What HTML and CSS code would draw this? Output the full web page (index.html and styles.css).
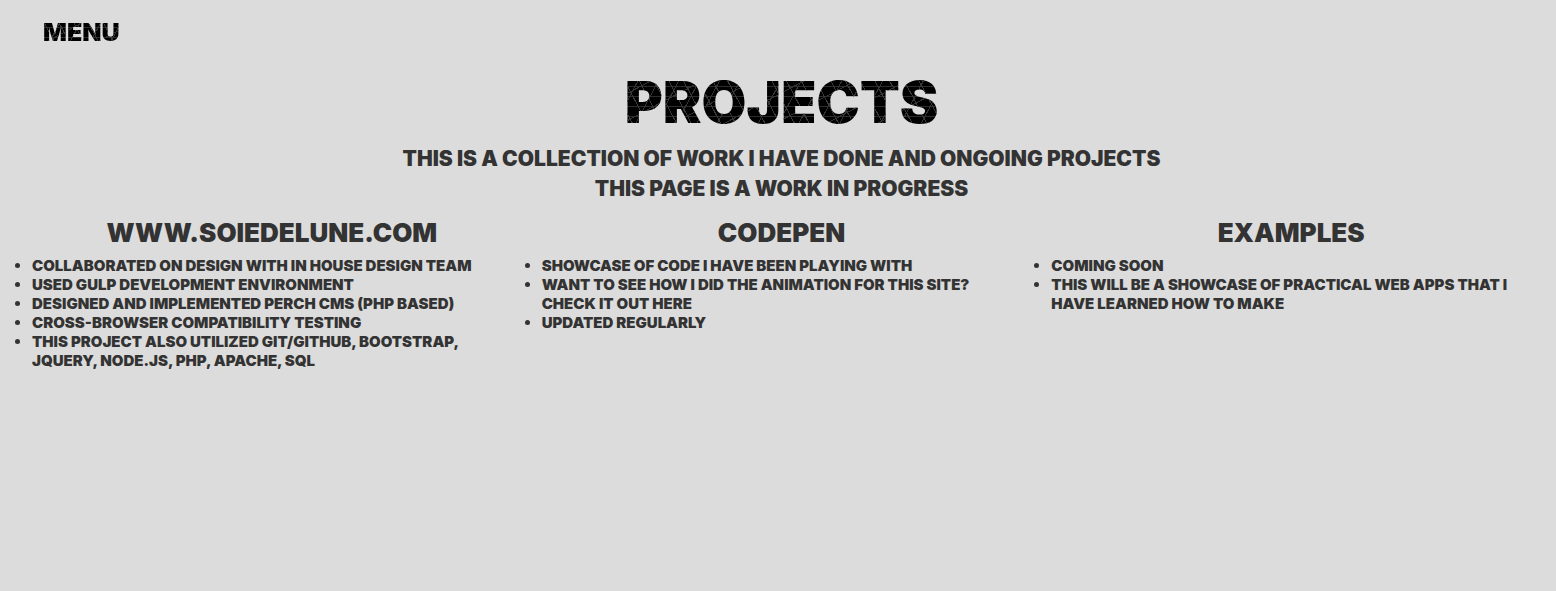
FILE: index.html
```html
<!DOCTYPE html>
<html lang="en">
<head>
<meta charset="utf-8">
<meta name="viewport" content="width=device-width, initial-scale=1">
<title>Projects</title>
<link rel="stylesheet" href="styles.css">
</head>
<body>
<header class="site-header">
  <button type="button" class="menu textured">MENU</button>
</header>
<main class="page">
  <h1 class="title textured">PROJECTS</h1>
  <p class="intro">THIS IS A COLLECTION OF WORK I HAVE DONE AND ONGOING PROJECTS</p>
  <p class="intro">THIS PAGE IS A WORK IN PROGRESS</p>
  <div class="columns">
    <section class="column">
      <h2 class="heading"><a class="link" href="#soiedelune">WWW.SOIEDELUNE.COM</a></h2>
      <ul class="list">
        <li>COLLABORATED ON DESIGN WITH IN HOUSE DESIGN TEAM</li>
        <li>USED GULP DEVELOPMENT ENVIRONMENT</li>
        <li>DESIGNED AND IMPLEMENTED PERCH CMS (PHP BASED)</li>
        <li>CROSS-BROWSER COMPATIBILITY TESTING</li>
        <li>THIS PROJECT ALSO UTILIZED GIT/GITHUB, BOOTSTRAP, JQUERY, NODE.JS, PHP, APACHE, SQL</li>
      </ul>
    </section>
    <section class="column">
      <h2 class="heading"><a class="link" href="#codepen">CODEPEN</a></h2>
      <ul class="list">
        <li>SHOWCASE OF CODE I HAVE BEEN PLAYING WITH</li>
        <li>WANT TO SEE HOW I DID THE ANIMATION FOR THIS SITE? <a class="link" href="#animation">CHECK IT OUT HERE</a></li>
        <li>UPDATED REGULARLY</li>
      </ul>
    </section>
    <section class="column">
      <h2 class="heading"><a class="link" href="#examples">EXAMPLES</a></h2>
      <ul class="list">
        <li>COMING SOON</li>
        <li>THIS WILL BE A SHOWCASE OF PRACTICAL WEB APPS THAT I HAVE LEARNED HOW TO MAKE</li>
      </ul>
    </section>
  </div>
</main>
</body>
</html>
```
FILE: styles.css
```css
* {
  box-sizing: border-box;
}

body {
  margin: 0;
  background: #dcdcdc;
  color: #333;
  font-family: "Arial Black", Inter, "Liberation Sans", sans-serif;
  font-weight: 900;
}

/* Black lettering crossed by thin grey lines */
.textured {
  color: transparent;
  background-color: #000;
  background-image:
    repeating-linear-gradient(62deg, transparent 0 12px, #3a3a3a 12px 13px),
    repeating-linear-gradient(118deg, transparent 0 17px, #333 17px 18px),
    repeating-linear-gradient(152deg, transparent 0 23px, #333 23px 24px),
    repeating-linear-gradient(0deg, transparent 0 9px, #2c2c2c 9px 10px);
  -webkit-background-clip: text;
  background-clip: text;
}

.site-header {
  padding: 17px 43px 0;
}

.menu {
  display: block;
  padding: 0;
  border: 0;
  font: inherit;
  font-size: 25px;
  line-height: 30px;
  cursor: pointer;
}

.page {
  padding: 21px 10px 0 17px;
}

.title {
  width: fit-content;
  margin: 0 auto 8px;
  font-size: 58px;
  font-weight: 900;
  line-height: 68px;
}

.intro {
  margin: 0;
  font-size: 21px;
  line-height: 30px;
  text-align: center;
}

.columns {
  display: grid;
  grid-template-columns: repeat(3, minmax(0, 1fr));
  margin-top: 12px;
}

.column {
  padding: 0 15px;
}

.heading {
  margin: 0 0 6px;
  font-size: 26px;
  font-weight: 900;
  line-height: 34px;
  text-align: center;
}

.link {
  color: inherit;
  text-decoration: none;
}

.list {
  margin: 0;
  padding: 0;
  font-size: 15px;
  line-height: 19px;
}
```
